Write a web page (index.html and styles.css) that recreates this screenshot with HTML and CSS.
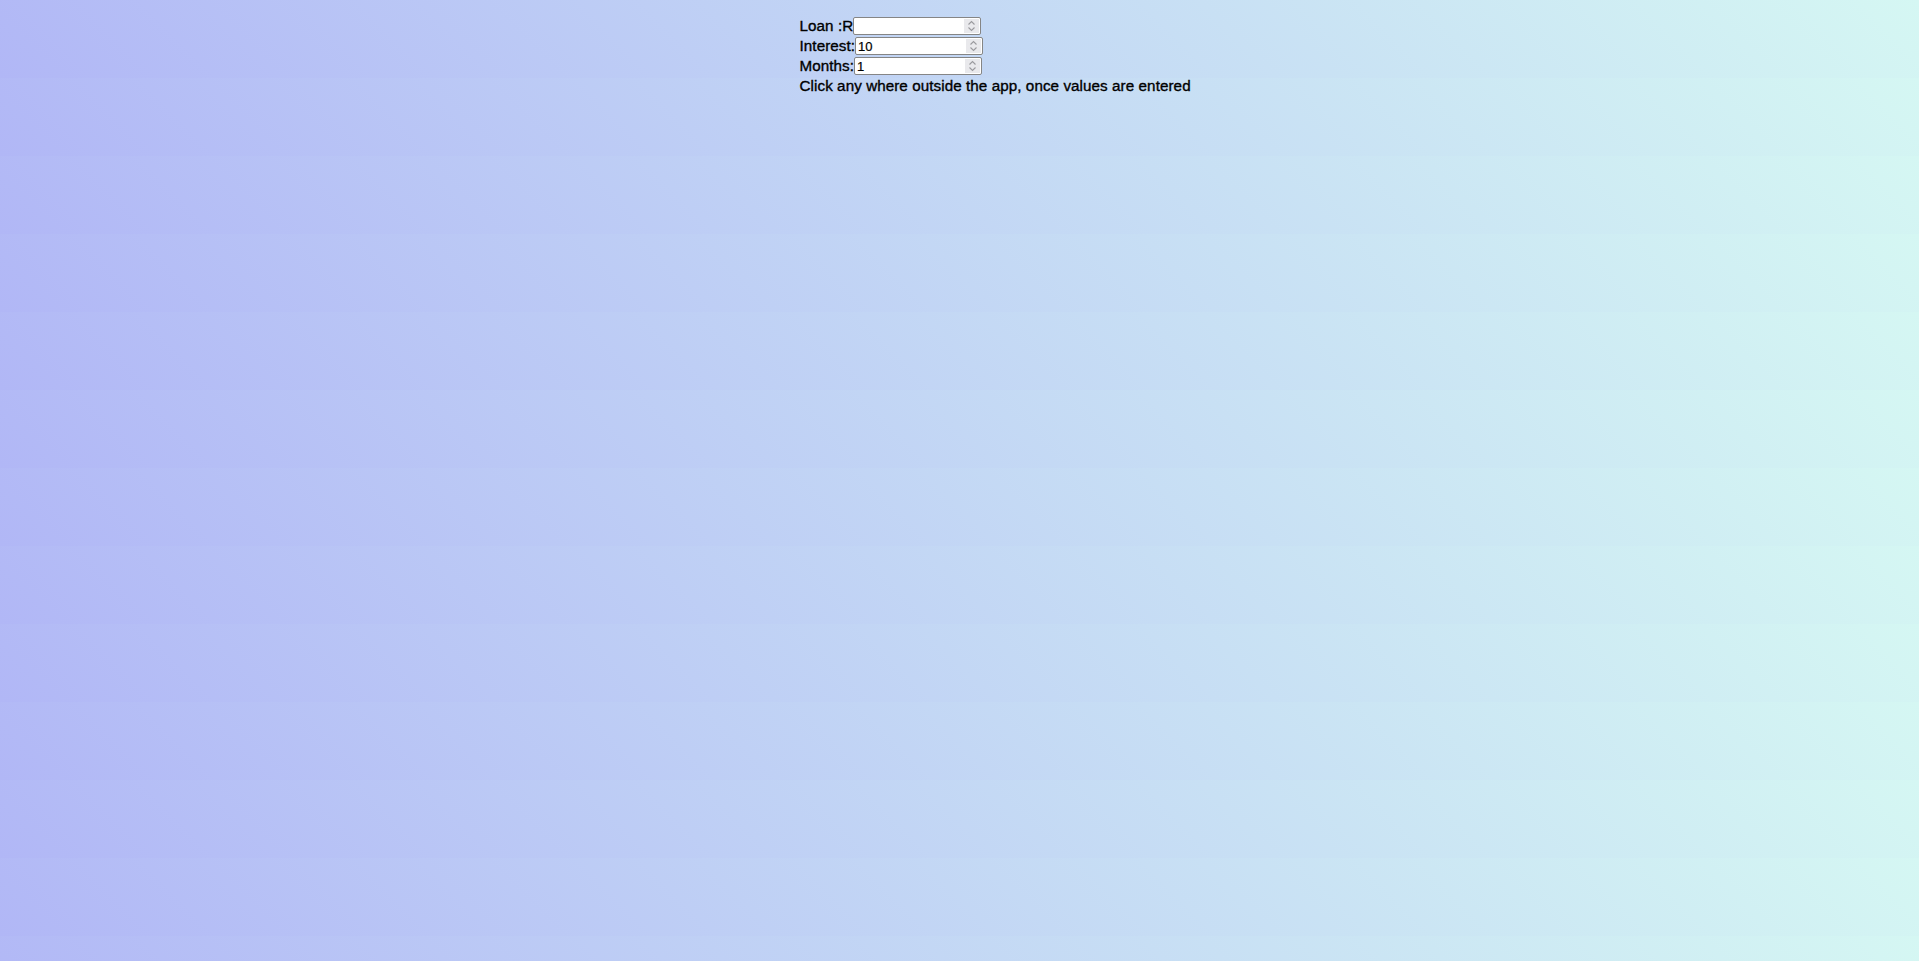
FILE: index.html
```html
<!DOCTYPE html>
<html lang="en">
<head>
<meta charset="utf-8">
<title>Loan calculator</title>
<link rel="stylesheet" href="styles.css">
</head>
<body>
<main class="app">
  <div class="row">
    <label class="label" for="loan">Loan :R</label>
    <span class="field-wrap">
      <input class="field" id="loan" type="number">
      <span class="spinner" aria-hidden="true"><svg width="15" height="14" viewBox="0 0 15 14"><path d="M4.5 5.5 L7.5 2.5 L10.5 5.5 M4.5 8.5 L7.5 11.5 L10.5 8.5" fill="none" stroke="#9a9a9e" stroke-width="1.1"/></svg></span>
    </span>
  </div>
  <div class="row">
    <label class="label" for="interest">Interest:</label>
    <span class="field-wrap">
      <input class="field" id="interest" type="number" value="10">
      <span class="spinner" aria-hidden="true"><svg width="15" height="14" viewBox="0 0 15 14"><path d="M4.5 5.5 L7.5 2.5 L10.5 5.5 M4.5 8.5 L7.5 11.5 L10.5 8.5" fill="none" stroke="#9a9a9e" stroke-width="1.1"/></svg></span>
    </span>
  </div>
  <div class="row">
    <label class="label" for="months">Months:</label>
    <span class="field-wrap">
      <input class="field" id="months" type="number" value="1">
      <span class="spinner" aria-hidden="true"><svg width="15" height="14" viewBox="0 0 15 14"><path d="M4.5 5.5 L7.5 2.5 L10.5 5.5 M4.5 8.5 L7.5 11.5 L10.5 8.5" fill="none" stroke="#9a9a9e" stroke-width="1.1"/></svg></span>
    </span>
  </div>
  <p class="hint">Click any where outside the app, once values are entered</p>
</main>
</body>
</html>
```

FILE: styles.css
```css
html {
  min-height: 100%;
  background-color: #c4d7f4;
  background-image: linear-gradient(45deg, #b1b7f6 0%, #d5f7f3 100%);
  background-size: 100% 78px;
  background-repeat: repeat;
}

body {
  margin: 0;
  font-family: "Liberation Sans", Arial, sans-serif;
  font-size: 15.2px;
  letter-spacing: 0.08px;
  color: #000;
  -webkit-text-stroke: 0.35px #000;
}

.app {
  width: 320px;
  margin: 0 auto;
  padding-top: 16px;
  white-space: nowrap;
}

.row {
  display: flex;
  align-items: center;
  height: 20px;
  line-height: 20px;
}

.field-wrap {
  position: relative;
  display: inline-flex;
  width: 128px;
  height: 18px;
}

.field {
  box-sizing: border-box;
  width: 128px;
  height: 18px;
  margin: 0;
  padding: 0 18px 0 2px;
  border: 1px solid #858585;
  border-radius: 2px;
  background: #fff;
  font-family: "Liberation Sans", Arial, sans-serif;
  font-size: 13px;
  letter-spacing: 0;
  color: #000;
  -webkit-text-stroke: 0.2px #000;
  outline: none;
}

.field::-webkit-inner-spin-button,
.field::-webkit-outer-spin-button {
  -webkit-appearance: none;
  margin: 0;
}

.spinner {
  position: absolute;
  top: 2px;
  right: 2px;
  width: 15px;
  height: 14px;
  background: #e9e9ec;
  pointer-events: none;
  display: block;
  line-height: 0;
}

.hint {
  margin: 0;
  line-height: 20px;
}
```
